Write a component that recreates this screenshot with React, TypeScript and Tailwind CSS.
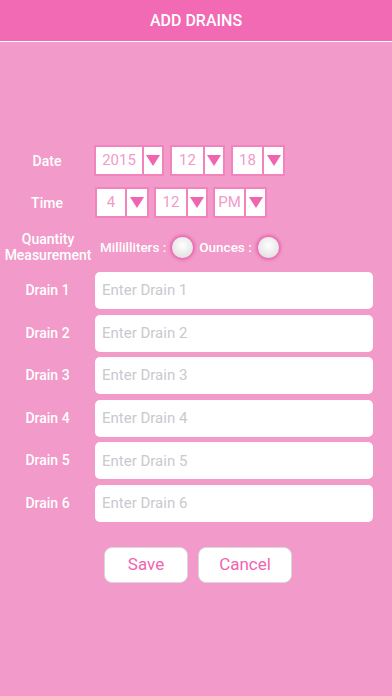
import React from 'react'

const FONT = { fontFamily: 'Roboto, "Liberation Sans", Arial, sans-serif' }

function Picker({ value, w, textW }: { value: string; w: string; textW: string }) {
  return (
    <div className={`flex h-[31px] ${w} border-2 border-[#f383bd] bg-white`}>
      <div className={`${textW} flex items-center justify-center text-[15px] text-[#f29ac9] border-r-2 border-[#f383bd]`}>{value}</div>
      <div className="flex flex-1 items-center justify-center">
        <svg width="14" height="11" viewBox="0 0 14 11">
          <path d="M0 0H14L7 11Z" fill="#f064b0" />
        </svg>
      </div>
    </div>
  )
}

function Radio() {
  return (
    <div className="h-[21px] w-[21px] rounded-full bg-[radial-gradient(circle_at_50%_40%,#ffffff,#d9d9d9)] shadow-[0_0_3px_2px_#e868ad]" />
  )
}

const drains = [1, 2, 3, 4, 5, 6]

export default function App() {
  return (
    <div className="min-h-[696px] w-full bg-[#f29ac9]" style={FONT}>
      {/* Header */}
      <div className="flex h-[42px] items-center justify-center bg-[#f26ab3] border-b border-white">
        <h1 className="text-[16px] font-medium text-white">ADD DRAINS</h1>
      </div>

      <div className="flex flex-col pt-[103px]">
        {/* Date */}
        <div className="flex items-center">
          <div className="w-[94px] pt-[2px] text-center text-[14px] font-medium text-white">Date</div>
          <div className="flex gap-[6px]">
            <Picker value="2015" w="w-[70px]" textW="w-[48px]" />
            <Picker value="12" w="w-[55px]" textW="w-[33px]" />
            <Picker value="18" w="w-[54px]" textW="w-[31px]" />
          </div>
        </div>

        {/* Time */}
        <div className="mt-[11px] flex items-center">
          <div className="w-[94px] pt-[2px] text-center text-[14px] font-medium text-white">Time</div>
          <div className="flex gap-[5px] pl-[1px]">
            <Picker value="4" w="w-[54px]" textW="w-[30px]" />
            <Picker value="12" w="w-[54px]" textW="w-[32px]" />
            <Picker value="PM" w="w-[54px]" textW="w-[31px]" />
          </div>
        </div>

        {/* Quantity */}
        <div className="mt-[13px] flex items-center">
          <div className="w-[96px] text-center text-[14px] font-medium leading-[16px] text-white">
            Quantity<br />Measurement
          </div>
          <div className="flex items-center pl-[4px] text-[13.5px] font-medium text-white">
            <span>Millilliters :</span>
            <div className="ml-[6px]"><Radio /></div>
            <span className="ml-[6px]">Ounces :</span>
            <div className="ml-[6px]"><Radio /></div>
          </div>
        </div>

        {/* Drains */}
        <div className="mt-[9px] flex flex-col gap-[5.6px]">
          {drains.map(n => (
            <div key={n} className="flex items-center">
              <div className="w-[95px] text-center text-[14px] font-medium text-white">Drain {n}</div>
              <div className="flex h-[37px] w-[278px] items-center rounded-[5px] bg-white px-[7px] text-[15px] text-[#c9c9ce]">
                Enter Drain {n}
              </div>
            </div>
          ))}
        </div>

        {/* Buttons */}
        <div className="mt-[25px] flex justify-center gap-[10px] pl-[4px]">
          <button className="h-[36px] w-[84px] rounded-[8px] border border-[#d8d8d8] bg-white text-[17px] text-[#f064b0]">Save</button>
          <button className="h-[36px] w-[94px] rounded-[8px] border border-[#d8d8d8] bg-white text-[17px] text-[#f064b0]">Cancel</button>
        </div>
      </div>
    </div>
  )
}
